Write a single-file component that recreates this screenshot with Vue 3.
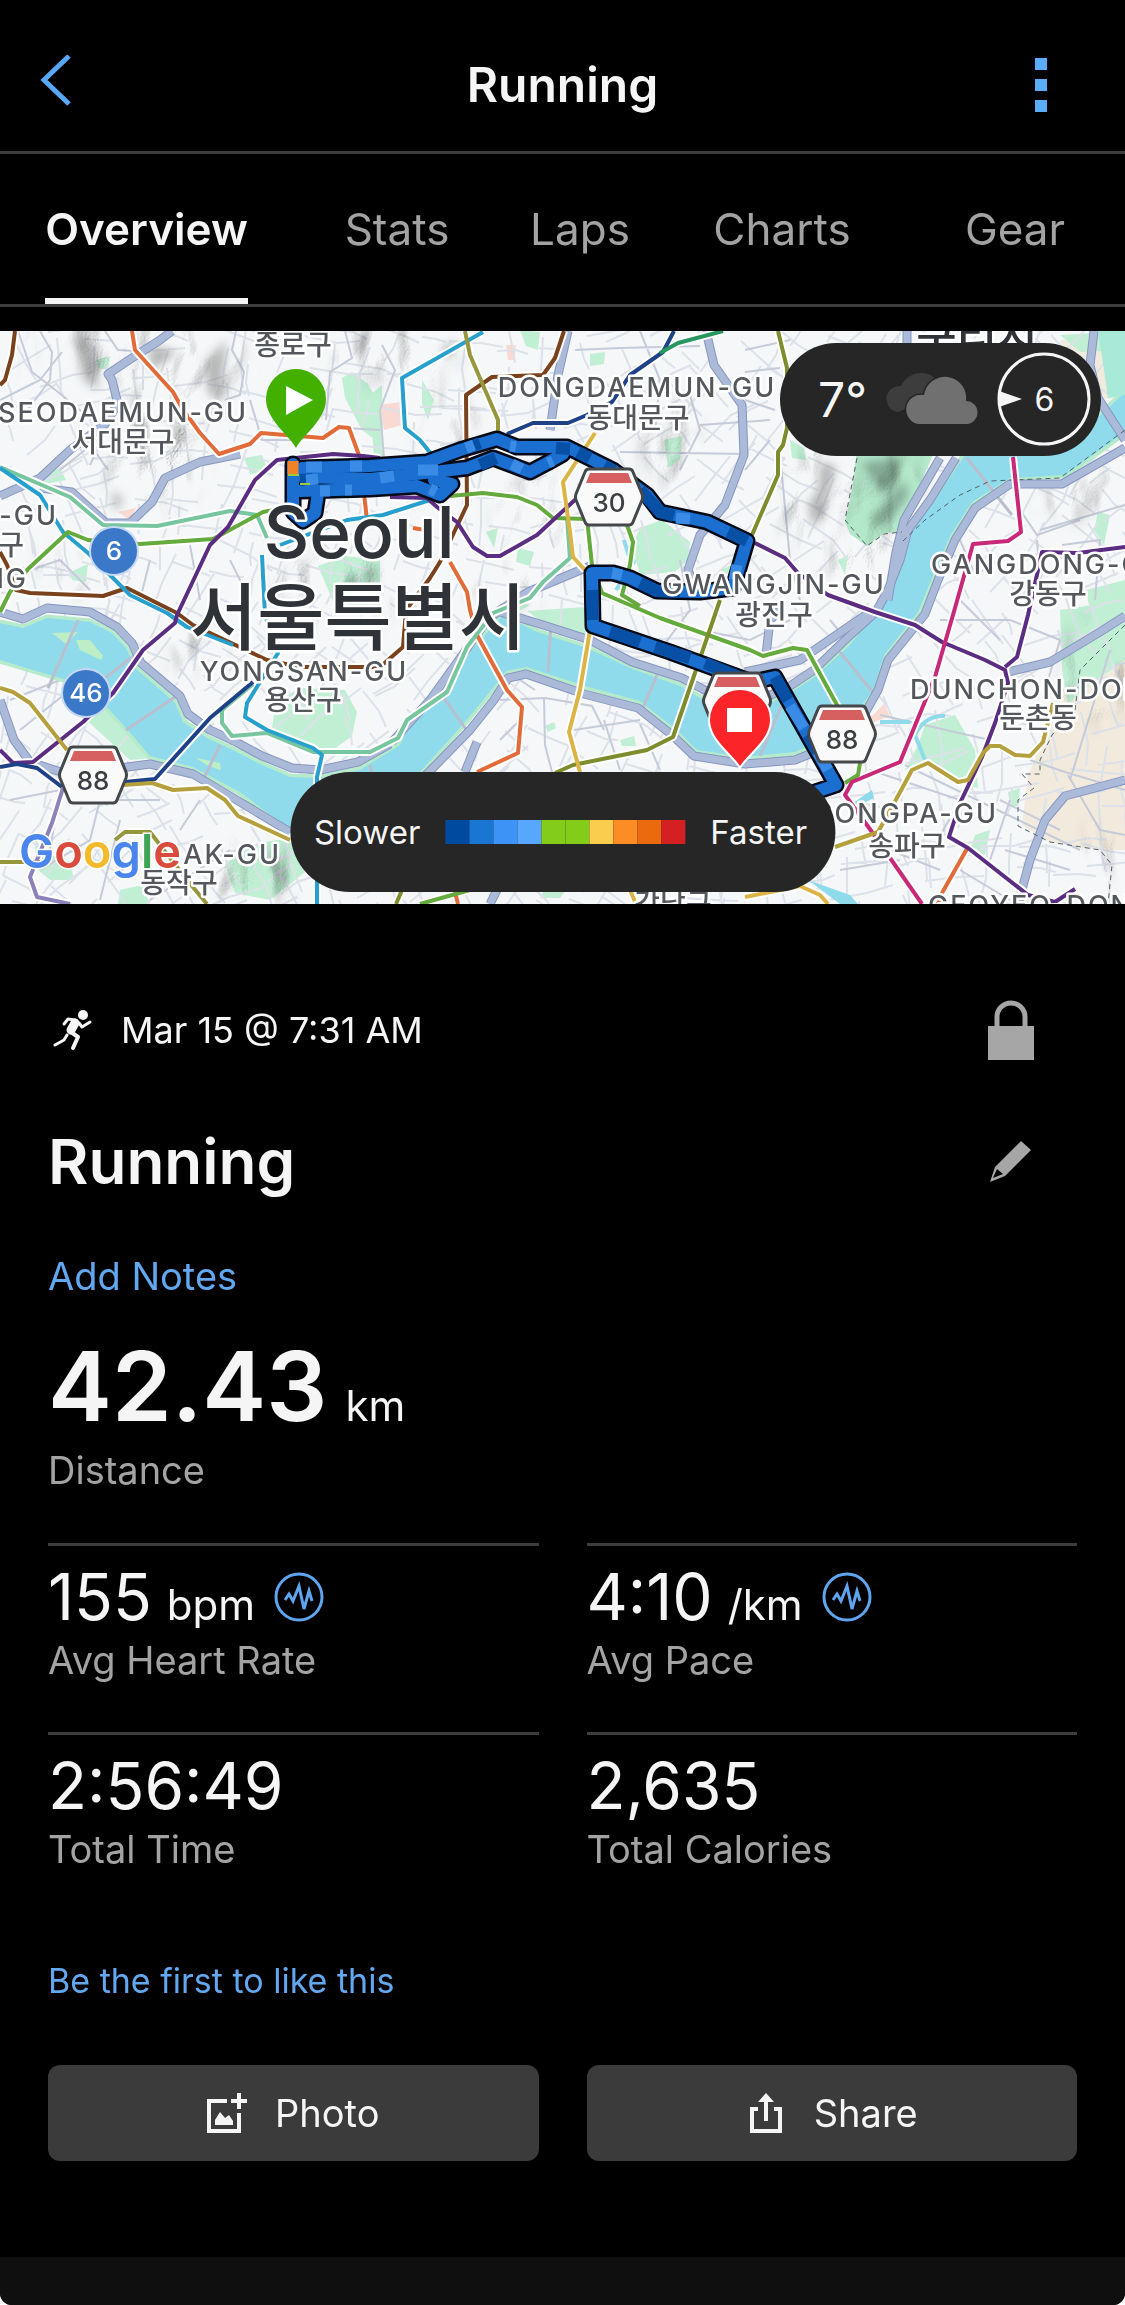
<script setup>
const tabs = ['Overview', 'Stats', 'Laps', 'Charts', 'Gear']

const stats = [
  { value: '155', unit: 'bpm', label: 'Avg Heart Rate', graph: true },
  { value: '4:10', unit: '/km', label: 'Avg Pace', graph: true },
  { value: '2:56:49', unit: '', label: 'Total Time', graph: false },
  { value: '2,635', unit: '', label: 'Total Calories', graph: false },
]

const paceColors = [
  '#004a9f', '#1976d2', '#3d94f6', '#57a7ff', '#84cc1a',
  '#84cc1a', '#fbcd4f', '#fb8c26', '#ea6a0d', '#d42022',
]

// Side streets: short strokes laid on a jittered grid, turned per district.
function buildStreets() {
  let seed = 11
  const rnd = () => {
    seed = (seed * 16807) % 2147483647
    return seed / 2147483647
  }
  const out = []
  for (let gx = 0; gx < 1125; gx += 40) {
    for (let gy = 325; gy < 910; gy += 38) {
      const base = Math.sin(gx / 190) * 0.7 + Math.cos(gy / 130) * 0.5
      for (let k = 0; k < 2; k++) {
        const a = base + k * 1.5708 + (rnd() - 0.5) * 0.4
        const len = 14 + rnd() * 26
        const x = gx + rnd() * 30
        const y = gy + rnd() * 30
        const mx = x + Math.cos(a) * len
        const my = y + Math.sin(a) * len
        const b = a + (rnd() - 0.5) * 0.7
        out.push(
          `M${x.toFixed(0)} ${y.toFixed(0)}L${mx.toFixed(0)} ${my.toFixed(0)}` +
            `L${(mx + Math.cos(b) * len * 0.7).toFixed(0)} ${(my + Math.sin(b) * len * 0.7).toFixed(0)}`
        )
      }
    }
  }
  return out.join('')
}
const streets = buildStreets()

const avenues =
  'M18 331L32 372L58 392L92 420M40 331L52 352L50 380L20 420M0 400L40 380L62 352M105 331L118 350L150 352' +
  'M236 331L232 350L244 372L240 395L225 400M345 331L352 358L330 372L326 420M250 400L262 440L300 440' +
  'M345 428L380 430M382 345L395 370L380 410L384 458M575 350L620 348L700 346M640 331L660 380L655 430' +
  'M620 452L745 454M590 470L650 492M690 395L700 430L680 470M700 425L770 420M745 350L790 340M745 372L780 368' +
  'M745 400L775 410M745 470L770 440M780 455L790 560L800 600M60 470L110 430M80 430L108 470M90 465L120 400' +
  'M0 580L60 560L90 590M150 560L140 600M190 545L200 600M230 560L250 600M10 700L60 680M20 730L70 690' +
  'M10 800L60 790L50 850M40 870L90 840L100 800L160 800M120 820L100 900M180 830L200 800M150 900L230 850' +
  'M500 700L545 698L592 706L604 730M544 698L545 745L552 772M520 720L500 740M574 730L640 720M640 724L660 770' +
  'M535 690L520 680M604 720L620 770M700 630L750 640L790 620M680 560L690 610L660 650M830 620L880 680' +
  'M960 540L975 575L1000 560M1040 530L1125 505M1037 540L1040 580M1062 545L1100 540L1095 600M1020 510L1037 535L1080 520' +
  'M960 600L1000 640M940 620L1010 620L1060 640M1060 640L1045 690M880 715L990 740M870 770L960 800M905 765L1080 850' +
  'M1000 800L1060 830M1030 760L1065 772L1125 790M1110 650L1070 780M1068 775L1100 830L1125 835M1005 850L1070 870' +
  'M890 850L940 870M935 845L960 800M840 870L900 860M960 870L1010 900M1010 800L990 860'

const expressways = [
  'M0 612L23 619L47 608L90 612L117 627L132 643L141 663L160 679L180 696L188 714L210 730L236 742L262 756L292 768L320 770L358 762L390 744',
  'M392 742L430 700L486 622L500 610L528 592L590 566',
  'M500 612L540 624L590 640L632 662L682 678L712 694L760 700L790 686L814 670L845 640L876 612L888 590L900 560L908 530L930 500L956 458',
  'M888 600L896 552L904 520L940 458',
  'M1125 448L1062 484L1010 484L975 508L955 540L938 580L925 614L888 660L878 690L860 722L832 745L795 760L745 764L694 756L672 735L638 708L584 694L526 674L508 678L494 700L470 730L425 776L400 800',
  'M290 832L240 802L193 774L150 764L120 768L70 775L30 762L14 740L0 700',
  'M465 772L477 742',
  'M0 496L40 478L70 450L105 424L118 404L112 380L108 374L132 358L160 340L172 331',
  'M40 488L72 492L84 503L106 523L130 523L152 502L165 478L200 462L240 454',
  'M568 331L558 375L550 430',
  'M706 331L714 365L742 405L744 455L725 505L700 535L688 570L696 590',
  'M907 331L907 345M1094 331L1090 365L1098 398L1125 440',
  'M1008 672L1050 662L1100 632L1125 616',
  'M1018 904L1030 860L1045 820L1065 796L1125 780',
  'M766 655L770 620L780 610M745 672L800 660L870 612M490 904L497 890',
]

const bridges =
  'M78 620L48 688M150 643L100 682M178 695L126 730M220 745L204 778M551 624L548 672M657 675L642 710M840 652L875 695' +
  'M370 765L378 790M444 698L470 735M967 458L1000 500L1012 515M790 686L760 756'

const parks =
  'M632 545L640 528L662 520L690 542L688 560L675 572L640 575ZM342 378L352 372L368 384L378 402L378 442L362 430L345 398Z' +
  'M318 566L345 556L380 560L380 612L335 606ZM276 702L300 688L345 690L357 712L352 736L330 752L292 738L272 728Z' +
  'M520 330L540 332L538 350L526 346ZM590 354L605 352L604 364L590 366ZM96 360L110 356L108 370L98 368ZM40 475L60 468L66 480L46 484Z' +
  'M244 458L262 455L268 472L250 474ZM370 395L382 385L384 470L374 460ZM422 380L434 400L428 420L422 404ZM664 440L682 436L680 460L668 468Z' +
  'M518 548L534 552L530 566L516 562ZM486 532L498 528L494 548ZM225 864L250 845L288 838L305 872L270 900L235 893Z' +
  'M550 880L570 884L560 898L540 898ZM120 890L142 885L150 904L118 904ZM905 770L918 745L925 725L955 715L975 750L978 788L950 780L930 760Z' +
  'M545 726L554 722L556 728L548 732ZM620 740L634 736L636 746L622 746ZM975 835L990 830L985 855L970 850ZM1008 792L1020 788L1018 806L1010 806Z' +
  'M1060 610L1125 600L1125 660L1082 690L1068 705L1062 670ZM1098 512L1110 515L1104 545L1094 530ZM1060 335L1125 331L1125 350L1080 352Z' +
  'M35 840L50 855L70 862L74 880L50 880L36 868ZM90 790L110 786L108 806L92 802ZM720 570L745 560L740 580ZM508 600L530 605L514 614Z' +
  'M70 705L120 700L152 758L130 760ZM527 611L585 607L590 640L545 624ZM790 440L804 448L806 460L792 458ZM70 572L88 564L86 582L72 580Z' +
  'M838 560L848 555L845 575ZM1086 590L1125 580L1125 615L1090 610ZM785 880L800 884L790 890Z'

const lines = [
  { c: '#7a421c', d: 'M15 331L12 355L5 380L0 385M0 552L7 565L16 590L30 593L103 596L127 588L177 613L193 625L267 660L300 667L380 667L403 647L406 610L430 578L440 562L467 505L466 395L492 377L543 375L555 358L564 331' },
  { c: '#e26b3a', d: 'M132 331L135 350L173 392L182 408L200 433L219 454L250 444L261 433L323 438L339 427L349 428L360 458L367 520M413 528L425 530M450 562L467 592L470 610L477 635L507 690L522 707L518 753L477 772M968 847L942 893L938 904M455 892L458 904' },
  { c: '#78c6a0', d: 'M0 467L70 497L103 525L157 526L230 511L257 515L267 538M253 684L222 710L222 723L232 736L267 733L313 752L370 752L398 738L407 720L447 692L467 647L493 613L530 598L543 582L570 558L567 518' },
  { c: '#28a0cd', d: 'M0 468L40 495L63 532L88 553L130 595L167 613L187 627L233 645M483 332L402 378L405 428L420 440L432 455M430 500L383 515L347 520L280 545M262 555L265 615L278 653L247 703L245 717L267 730L313 748L322 755L317 777L317 904' },
  { c: '#64aa3c', d: 'M0 612L10 592L28 569L68 532L88 540L140 544L213 539L263 512L300 505M450 496L483 493L517 497L537 505L553 518L587 519L592 565L602 593L660 618L750 650L763 656L793 648L807 650L837 705L860 763L858 775L845 783M627 525L633 542L630 565L622 595L640 606M420 904L470 890' },
  { c: '#5a2d82', d: 'M380 458L363 456L333 454L277 460L255 480L228 527L210 545L177 615L175 623L143 650L113 693L83 722L33 762L13 763L0 750M390 497L427 498L437 507L457 522L473 547L487 556L500 556L537 535L577 498M755 543L785 558L798 573L828 595L875 612L915 625L942 642L985 660L1005 670L1008 683L995 723L982 757L960 803L949 837L968 848L1028 895L1055 902L1075 889M1125 547L1078 553L1042 552L1028 615L1017 657L1005 667' },
  { c: '#c82878', d: 'M1013 457L1021 532L1008 541L973 544L953 615L935 677L900 762L852 782L845 795L872 832L922 904' },
  { c: '#96963c', d: 'M465 331L470 355L498 420L498 436M0 862L40 862M115 840L125 832L150 832L187 880L207 904' },
  { c: '#7d8c2d', d: 'M778 331L787 368L787 428L783 445L778 452L778 475L752 535M720 600L673 737L647 750L573 765L555 773M402 890L396 904' },
  { c: '#1e4187', d: 'M507 434L533 423L568 423L587 415L612 402L630 375L663 352L674 331M0 767L17 764L37 768L62 787M125 782L155 779L210 718L253 682' },
  { c: '#28965f', d: 'M660 353L678 343L723 331' },
  { c: '#dcb446', d: 'M595 433L563 482L570 532L573 557L585 570M590 630L580 690L569 732L580 772M630 890L636 904M745 897L800 886L820 895L828 904' },
  { c: '#b4a03c', d: 'M0 688L13 692L30 703L67 750M123 785L152 783L173 790L207 788L225 800L238 816L290 840M835 847L878 832L892 807L912 770L928 763L958 782L968 780L983 753L990 746L1000 746L1015 755L1030 756L1043 742L1053 703' },
  { c: '#8c82b9', d: 'M63 788L52 823L30 877L37 897L70 904' },
]

const route = [
  'M293 464L293 512L303 521L315 513L318 493',
  'M302 468L370 466L427 462L460 450L497 439L517 447L567 447L613 470L647 495L660 512L707 522L747 541L733 588L700 592L657 591L630 578L613 573L592 573L593 626L670 652L752 682L775 677L836 785L812 793',
  'M303 477L370 479L443 471L467 468L493 458L530 472L547 463L563 454',
  'M300 491L370 489L417 486L440 495L452 484L434 480',
]

const routeLight = 'M306 467L322 467M350 466L362 466M306 480L318 479M380 478L394 476M418 470L438 470M466 448L474 445M320 491L330 491M345 490L352 490M430 489L436 492M510 446L516 447M512 464L522 469M548 463L553 461M676 518L690 519M612 573L622 575M737 565L734 580M790 706L804 728M818 752L828 770'
const routeDark = 'M470 447L480 443M480 465L496 458M556 448L570 449M578 452L590 458M604 466L614 471M640 490L660 512L674 516M728 532L747 541M592 590L593 620M610 632L640 642M655 647L690 658M705 663L752 682M775 677L788 700M808 735L818 752M640 583L657 591L680 592M300 480L312 479'

const shields = [
  { x: 609, y: 497, n: '30' },
  { x: 737, y: 701, n: '' },
  { x: 93, y: 775, n: '88' },
  { x: 842, y: 734, n: '88' },
]
const roundels = [
  { x: 114, y: 551, n: '6' },
  { x: 86, y: 693, n: '46' },
]

const labels = [
  { t: 'SEODAEMUN-GU', x: 123, y: 422 },
  { t: 'DONGDAEMUN-GU', x: 637, y: 397 },
  { t: 'GWANGJIN-GU', x: 774, y: 594 },
  { t: 'YONGSAN-GU', x: 304, y: 681 },
  { t: '-GU', x: 58, y: 525, a: 'end' },
  { t: 'NG', x: 28, y: 588, a: 'end' },
  { t: 'GANGDONG-GU', x: 931, y: 574, a: 'start' },
  { t: 'DUNCHON-DONG', x: 910, y: 699, a: 'start' },
  { t: 'SONGPA-GU', x: 998, y: 823, a: 'end' },
  { t: 'AK-GU', x: 281, y: 864, a: 'end' },
  { t: 'GEOYEO-DONG', x: 928, y: 915, a: 'start' },
]
const korean = [
  { t: '종로구', x: 293, y: 355 },
  { t: '서대문구', x: 123, y: 452 },
  { t: '동대문구', x: 638, y: 428 },
  { t: '구', x: 11, y: 555 },
  { t: '광진구', x: 774, y: 625 },
  { t: '강동구', x: 1048, y: 604 },
  { t: '둔촌동', x: 1038, y: 728 },
  { t: '용산구', x: 303, y: 710 },
  { t: '동작구', x: 179, y: 893 },
  { t: '송파구', x: 907, y: 856 },
  { t: '강남구', x: 673, y: 914 },
]
</script>

<template>
  <div class="app">
    <header class="bar">
      <button class="icon-btn" type="button" aria-label="Back">
        <svg width="32" height="60" viewBox="0 0 32 60" fill="none" stroke="#58a7f5" stroke-width="5">
          <path d="M29 1L4 25L29 49" />
        </svg>
      </button>
      <p class="bar-title">Running</p>
      <button class="icon-btn end" type="button" aria-label="More options">
        <svg width="12" height="54" viewBox="0 0 12 54" fill="#5aabf8">
          <path d="M0 0H12V12H0ZM0 21H12V33H0ZM0 42H12V54H0Z" />
        </svg>
      </button>
    </header>

    <nav class="tabs">
      <a v-for="(t, i) in tabs" :key="t" href="#" class="tab" :class="{ active: i === 0 }"><span>{{ t }}</span></a>
    </nav>

    <section class="map">
      <svg class="map-art" viewBox="0 331 1125 573" role="img" aria-label="Route map">
        <defs>
          <filter id="relief" x="0" y="0" width="100%" height="100%">
            <feTurbulence type="fractalNoise" baseFrequency="0.016 0.01" numOctaves="3" seed="7" result="n" />
            <feColorMatrix in="n" type="matrix" values="0 0 0 0 0  0 0 0 0 0  0 0 0 0 0  1 0 0 0 0" result="h" />
            <feDiffuseLighting in="h" surfaceScale="18" diffuseConstant="1.25" lighting-color="#ffffff">
              <feDistantLight azimuth="205" elevation="55" />
            </feDiffuseLighting>
          </filter>
          <filter id="soft" x="-20%" y="-20%" width="140%" height="140%"><feGaussianBlur stdDeviation="12" /></filter>
          <filter id="soft-sm" x="-30%" y="-30%" width="160%" height="160%"><feGaussianBlur stdDeviation="5" /></filter>
          <mask id="hills" maskUnits="userSpaceOnUse" x="0" y="331" width="1125" height="573">
            <g fill="#fff" filter="url(#soft)">
              <path d="M60 320H235L240 370L190 420L200 480L170 510L120 490L100 450L140 400L90 370Z" />
              <ellipse cx="395" cy="350" rx="60" ry="28" />
              <ellipse cx="450" cy="430" rx="26" ry="40" />
              <ellipse cx="335" cy="590" rx="60" ry="36" />
              <ellipse cx="815" cy="495" rx="32" ry="46" />
              <ellipse cx="860" cy="560" rx="40" ry="20" />
              <ellipse cx="890" cy="500" rx="30" ry="46" />
              <ellipse cx="670" cy="445" rx="22" ry="40" />
              <ellipse cx="535" cy="520" rx="34" ry="40" />
              <ellipse cx="1100" cy="670" rx="36" ry="46" />
              <ellipse cx="1080" cy="495" rx="50" ry="16" />
              <ellipse cx="250" cy="875" rx="50" ry="26" />
              <ellipse cx="195" cy="650" rx="26" ry="18" />
              <ellipse cx="1105" cy="850" rx="24" ry="18" />
              <ellipse cx="15" cy="345" rx="14" ry="20" />
              <ellipse cx="70" cy="570" rx="34" ry="16" />
              <ellipse cx="500" cy="590" rx="40" ry="16" />
            </g>
          </mask>
        </defs>

        <rect y="331" width="1125" height="573" fill="#f6f7f8" />
        <path d="M1045 735L1060 690L1125 655V850L1100 850L1050 842L1022 825L1028 775Z" fill="#f2ebdd" />
        <path d="M1060 340H1118V398L1085 400Z" fill="#f0ebdd" />
        <path :d="parks" fill="#c0efd4" />
        <path d="M380 405L400 402L402 425L384 430ZM868 720L884 704L890 716L874 722ZM506 345L516 345L514 360L508 360ZM118 512L136 508L130 520Z" fill="#f9d9d2" />
        <path :d="streets" fill="none" stroke="#dde1e9" stroke-width="2" />
        <path :d="avenues" fill="none" stroke="#c6cbd9" stroke-width="2" />
        <path d="M857 450L935 450L905 520L900 532L884 533L867 546L850 534L845 522L852 490Z" fill="#b4e8ca" />
        <g filter="url(#soft-sm)" fill="#5f7a6c" opacity=".55">
          <path d="M862 462L900 458L886 490L872 482ZM870 520L905 480L908 496L880 530Z" />
        </g>
        <g filter="url(#soft-sm)" fill="#8d8d8d" opacity=".6">
          <path d="M820 462L836 466L822 520L812 526L808 505L818 490ZM76 338L96 345L98 390L84 380ZM150 345L178 352L150 372ZM205 362L226 340L222 400L208 394ZM440 350L455 340L452 360ZM172 420L186 430L176 450ZM112 490L124 500L114 512Z" />
        </g>
        <rect y="331" width="1125" height="573" filter="url(#relief)" mask="url(#hills)" class="relief" />

        <path
          d="M0 623L23 628L47 618L90 622L112 633L126 648L137 670L156 686L175 703L183 722L207 738L233 750L260 764L290 777L320 778L360 770L400 745L410 724L450 692L467 655L503 615L537 632L587 648L630 668L680 686L703 700L765 706L792 692L816 676L849 646L884 602L899 560L914 526L936 498L965 455L1040 440L1090 425L1125 392V432L1065 475L1010 478L972 502L950 536L932 578L918 612L884 655L873 690L855 714L828 738L795 752L745 757L697 750L677 730L640 701L585 686L527 667L506 671L488 694L465 722L420 772L390 800L345 830H290L240 792L193 767L150 756L133 736L108 708L67 680L33 670L0 660Z"
          fill="#90dbeb" stroke="#b5ebcb" stroke-width="7" paint-order="stroke"
        />
        <path d="M1098 331L1125 331V395L1108 398L1104 370Z" fill="#a9e9d8" />
        <path d="M52 633L78 632L66 644ZM76 640L90 640L103 656L101 660L80 650ZM196 758L220 763L221 770L208 766Z" fill="#bdeec6" />
        <path d="M915 735Q925 715 945 716M915 735L925 760M880 722H910M624 540L630 560L620 590M630 545L634 562L616 590" fill="none" stroke="#90dbeb" stroke-width="4" />
        <path d="M850 805L872 790L874 798L858 806ZM808 880L850 895L858 904H840Z" fill="#90dbeb" />
        <path :d="bridges" fill="none" stroke="#b9bfce" stroke-width="3" />
        <g fill="none" stroke-linejoin="round">
          <path v-for="d in expressways" :key="'c' + d" :d="d" stroke="#8596bf" stroke-width="9" />
          <path v-for="d in expressways" :key="'f' + d" :d="d" stroke="#acbad9" stroke-width="7" />
        </g>
        <path
          d="M903 541L925 520L960 495L990 481L1060 478L1125 430M857 458L845 520L867 546L884 534L902 532M1125 625L1080 670L1075 710L1052 735L1040 760V774H1022L1034 788L1018 800V826L1050 842L1100 850L1112 865L1108 904"
          fill="none" stroke="#4f6266" stroke-width="1" stroke-dasharray="5 4"
        />

        <g fill="none" stroke-linejoin="round">
          <path v-for="l in lines" :key="'w' + l.c" :d="l.d" stroke="#fff" stroke-width="8" />
          <path v-for="l in lines" :key="l.c" :d="l.d" :stroke="l.c" stroke-width="4" />
        </g>

        <g fill="none" stroke-linejoin="round">
          <path v-for="d in route" :key="'o' + d" :d="d" stroke="#050a18" stroke-width="17" stroke-linecap="round" />
          <path v-for="d in route" :key="d" :d="d" stroke="#1b6fd0" stroke-width="12" stroke-linecap="round" />
          <path :d="routeDark" stroke="#084fa6" stroke-width="12" />
          <path :d="routeLight" stroke="#3a8be6" stroke-width="11" />
          <path d="M293 461V474" stroke="#f08228" stroke-width="11" />
          <path d="M288 475H299M300 484H310" stroke="#9ccc3c" stroke-width="2" />
        </g>

        <g v-for="s in shields" :key="s.x" :transform="`translate(${s.x} ${s.y})`">
          <path d="M-20 -28H20Q23 -28 24 -25L33 -3Q34 0 33 3L24 25Q23 28 20 28H-20Q-23 28 -24 25L-33 3Q-34 0 -33 -3L-24 -25Q-23 -28 -20 -28Z" fill="#fafafa" stroke="#45484b" stroke-width="3" />
          <path d="M-19 -24H19L23 -14H-23Z" fill="#d66060" />
          <text class="shield-no" y="15">{{ s.n }}</text>
        </g>
        <g v-for="r in roundels" :key="r.n" :transform="`translate(${r.x} ${r.y})`">
          <circle r="24" fill="#3b78c8" stroke="#c4d8f4" stroke-width="2" />
          <text class="round-no" y="9">{{ r.n }}</text>
        </g>

        <g class="city">
          <text x="359" y="558">Seoul</text>
          <text class="city-ko" x="358" y="644">서울특별시</text>
          <text class="town-ko" x="977" y="352">구리시</text>
        </g>
        <text v-for="l in labels" :key="l.t" class="district" :x="l.x" :y="l.y" :text-anchor="l.a || 'middle'">{{ l.t }}</text>
        <text v-for="l in korean" :key="l.t" class="district-ko" :x="l.x" :y="l.y">{{ l.t }}</text>

        <path d="M296 448C290 436 266 420 266 399A30 30 0 0 1 326 399C326 420 302 436 296 448Z" fill="#43b000" />
        <path d="M286 386V415L313 400Z" fill="#fff" />
        <path d="M740 768C734 756 709 741 709 720A31 31 0 0 1 771 720C771 741 746 756 740 768Z" fill="#fb2428" stroke="#fff" stroke-width="2" />
        <path d="M727 708H752V732H727Z" fill="#fff" />

        <text class="brand" x="19" y="868"><tspan fill="#4a86ee">G</tspan><tspan fill="#d94b3d">o</tspan><tspan fill="#f3bb2c">o</tspan><tspan fill="#4a86ee">g</tspan><tspan fill="#3ea556">l</tspan><tspan fill="#d94b3d">e</tspan></text>
      </svg>

      <div class="weather">
        <span class="temp">7°</span>
        <svg width="94" height="54" viewBox="0 0 94 54">
          <path d="M13 39A13 13 0 0 1 16 13A22 22 0 0 1 53 8L40 26L20 36Z" fill="#3d3d3d" />
          <path d="M33 51A14 14 0 0 1 39 22A21 21 0 0 1 81 28A11 11 0 0 1 81 51Z" fill="#707070" stroke="#262626" stroke-width="3" paint-order="stroke" />
        </svg>
        <span class="wind">
          <svg width="95" height="95" viewBox="0 0 95 95">
            <circle cx="47" cy="47" r="45" fill="none" stroke="#f5f5f5" stroke-width="3" />
            <path d="M2 39L25 47L2 55Z" fill="#f5f5f5" />
          </svg>
          <span class="wind-no">6</span>
        </span>
      </div>

      <div class="legend">
        <span>Slower</span>
        <span class="scale"><i v-for="(c, i) in paceColors" :key="i" :style="{ background: c }"></i></span>
        <span>Faster</span>
      </div>
    </section>

    <main class="content">
      <div class="row meta">
        <svg width="40" height="42" viewBox="0 0 40 42" fill="none" stroke="#f5f5f5" stroke-linecap="round" stroke-linejoin="round">
          <circle cx="30" cy="6" r="5" fill="#f5f5f5" stroke="none" />
          <path d="M11 15L15 10L22 11" stroke-width="3" />
          <path d="M22 14L18 21" stroke-width="9" />
          <path d="M26 14L29 18L37 13" stroke-width="3" />
          <path d="M14 26L11 31L2 36" stroke-width="3" />
          <path d="M18 23L25 28L20 39" stroke-width="4" />
        </svg>
        <time class="date">Mar 15 @ 7:31 AM</time>
        <button class="icon-btn side" type="button" aria-label="Privacy">
          <svg width="48" height="60" viewBox="0 0 48 60">
            <path d="M10 28V17A14 14 0 0 1 38 17V28" fill="none" stroke="#a6a6a6" stroke-width="5" />
            <path d="M1 26H47V60H1Z" fill="#a6a6a6" />
          </svg>
        </button>
      </div>

      <div class="row">
        <h1 class="name">Running</h1>
        <button class="icon-btn side" type="button" aria-label="Edit name">
          <svg width="48" height="42" viewBox="0 0 48 42">
            <path d="M34 0L44 9L18 35L3 41L8 26ZM10 28L6 37L16 33Z" fill="#a6a6a6" fill-rule="evenodd" />
          </svg>
        </button>
      </div>

      <a class="notes" href="#">Add Notes</a>

      <p class="distance"><strong>42.43</strong><span class="unit">km</span></p>
      <p class="label">Distance</p>

      <div class="grid stats">
        <div v-for="s in stats" :key="s.label" class="stat">
          <p class="value">
            <span>{{ s.value }}</span>
            <span v-if="s.unit" class="unit">{{ s.unit }}</span>
            <button v-if="s.graph" class="icon-btn graph" type="button" :aria-label="s.label + ' chart'">
              <svg width="50" height="50" viewBox="0 0 50 50" fill="none" stroke="#5ea4ee">
                <circle cx="25" cy="25" r="23" stroke-width="3" />
                <path d="M11 28L15 22L19 29L25 14L30 37L35 19L38 29" stroke-width="3" stroke-linejoin="miter" />
              </svg>
            </button>
          </p>
          <p class="label">{{ s.label }}</p>
        </div>
      </div>

      <a class="likes" href="#">Be the first to like this</a>

      <div class="grid actions">
        <button class="action" type="button">
          <svg width="40" height="40" viewBox="0 0 40 40" fill="none" stroke="#f5f5f5" stroke-width="4">
            <path d="M20 8H2V38H32V20" />
            <path d="M32 0V16M24 8H40" />
            <path d="M8 32V27L13 19L18 25L22 22L26 28V32Z" fill="#f5f5f5" stroke="none" />
          </svg>
          <span>Photo</span>
        </button>
        <button class="action" type="button">
          <svg width="40" height="40" viewBox="0 0 40 40" fill="none" stroke="#f5f5f5" stroke-width="4">
            <path d="M12 16H6V38H34V16H28" />
            <path d="M20 28V5" />
            <path d="M20 0L28 9H12Z" fill="#f5f5f5" stroke="none" />
          </svg>
          <span>Share</span>
        </button>
      </div>
    </main>

    <footer class="foot"></footer>
  </div>
</template>

<style>
body {
  margin: 0;
  background: #fff;
}
</style>

<style scoped>
.app {
  overflow: hidden;
  border-radius: 0 0 12px 12px;
  background: #000;
  color: #f5f5f5;
  font-family: Inter, "Noto Sans CJK KR", sans-serif;
}
p,
h1 {
  margin: 0;
}
a {
  color: #62a8f0;
  text-decoration: none;
}
button {
  border: 0;
  padding: 0;
  color: inherit;
  font-family: inherit;
}
svg {
  display: block;
  flex: none;
}
.icon-btn {
  background: none;
}

.bar {
  display: grid;
  grid-template-columns: 1fr auto 1fr;
  align-items: center;
  padding: 38px 78px 20px 40px;
  border-bottom: 3px solid #3d3d3d;
}
.bar .icon-btn {
  justify-self: start;
}
.bar .icon-btn.end {
  justify-self: end;
}
.bar-title {
  padding-left: 38px;
  font-size: 48px;
  font-weight: 600;
  line-height: 93px;
}

.tabs {
  display: grid;
  grid-template-columns: 293fr 208fr 158fr 246fr 220fr;
  border-bottom: 3px solid #3d3d3d;
  margin-bottom: 24px;
}
.tab {
  display: flex;
  justify-content: center;
  color: #a3a3a3;
  font-size: 44px;
  line-height: 138px;
}
.tab span {
  padding-top: 6px;
  border-bottom: 6px solid transparent;
}
.tab.active {
  color: #f5f5f5;
  font-weight: 600;
}
.tab.active span {
  border-color: #f5f5f5;
}

.map {
  position: relative;
}
.map-art {
  width: 100%;
  height: auto;
}
.relief {
  mix-blend-mode: multiply;
}
.map-art text {
  font-family: Inter, "Noto Sans CJK KR", sans-serif;
}
.district,
.district-ko {
  fill: #54585d;
  stroke: #fff;
  stroke-width: 5px;
  stroke-linejoin: round;
  paint-order: stroke;
  font-size: 27px;
  font-weight: 500;
}
.district {
  letter-spacing: 2px;
}
.district-ko {
  text-anchor: middle;
  font-size: 28px;
}
.city text {
  fill: #2f3338;
  stroke: #fff;
  stroke-width: 5px;
  stroke-linejoin: round;
  paint-order: stroke;
  text-anchor: middle;
  font-size: 71px;
  font-weight: 500;
}
.city .city-ko {
  font-size: 73px;
}
.city .town-ko {
  font-size: 44px;
}
.shield-no,
.round-no {
  text-anchor: middle;
  font-size: 26px;
  font-weight: 500;
  fill: #3d4043;
}
.round-no {
  fill: #fff;
}
.brand {
  font-size: 47px;
  font-weight: 600;
  stroke: #fff;
  stroke-width: 3px;
  paint-order: stroke;
}

.weather,
.legend {
  position: absolute;
  display: flex;
  align-items: center;
  background: #262626;
}
.weather {
  top: 12px;
  right: 24px;
  gap: 18px;
  padding: 9px 9px 9px 38px;
  border-radius: 57px;
}
.temp {
  font-size: 48px;
}
.wind {
  display: grid;
  place-items: center;
}
.wind > * {
  grid-area: 1 / 1;
}
.wind-no {
  font-size: 32px;
}
.legend {
  left: 50%;
  bottom: 12px;
  gap: 25px;
  padding: 0 28px 0 24px;
  border-radius: 60px;
  transform: translateX(-50%);
  font-size: 33px;
  line-height: 120px;
}
.scale {
  display: flex;
}
.scale i {
  width: 24px;
  height: 24px;
}

.content {
  padding: 96px 48px;
}
.row {
  display: flex;
  align-items: center;
}
.meta {
  gap: 28px;
  padding-left: 5px;
  margin-bottom: 62px;
}
.date {
  font-size: 36px;
}
.side {
  margin: 0 42px 0 auto;
}
.name {
  font-size: 62px;
  font-weight: 600;
  line-height: 80px;
}
.notes {
  display: block;
  margin: 50px 0 36px;
  font-size: 38px;
  line-height: 48px;
}
.distance {
  display: flex;
  align-items: baseline;
  gap: 18px;
  margin-bottom: 10px;
  font-size: 96px;
  line-height: 100px;
}
.distance strong {
  font-weight: 600;
}
.unit {
  font-size: 42px;
  line-height: 48px;
}
.label {
  color: #a3a3a3;
  font-size: 38px;
  line-height: 48px;
}
.grid {
  display: grid;
  grid-template-columns: 1fr 1fr;
  column-gap: 48px;
}
.stats {
  margin: 49px 0 36px;
}
.stat {
  padding: 19px 0 48px;
  border-top: 3px solid #3d3d3d;
}
.value {
  display: flex;
  align-items: baseline;
  gap: 15px;
  margin-bottom: 7px;
  font-size: 64px;
  line-height: 64px;
}
.graph {
  align-self: center;
  margin-left: 4px;
}
.likes {
  display: block;
  margin-bottom: 60px;
  font-size: 34px;
  line-height: 48px;
}
.action {
  display: flex;
  align-items: center;
  justify-content: center;
  gap: 28px;
  border-radius: 12px;
  background: #3b3b3b;
  font-size: 38px;
  line-height: 96px;
}
.foot {
  height: 48px;
  background: #0f0f0f;
}
</style>
